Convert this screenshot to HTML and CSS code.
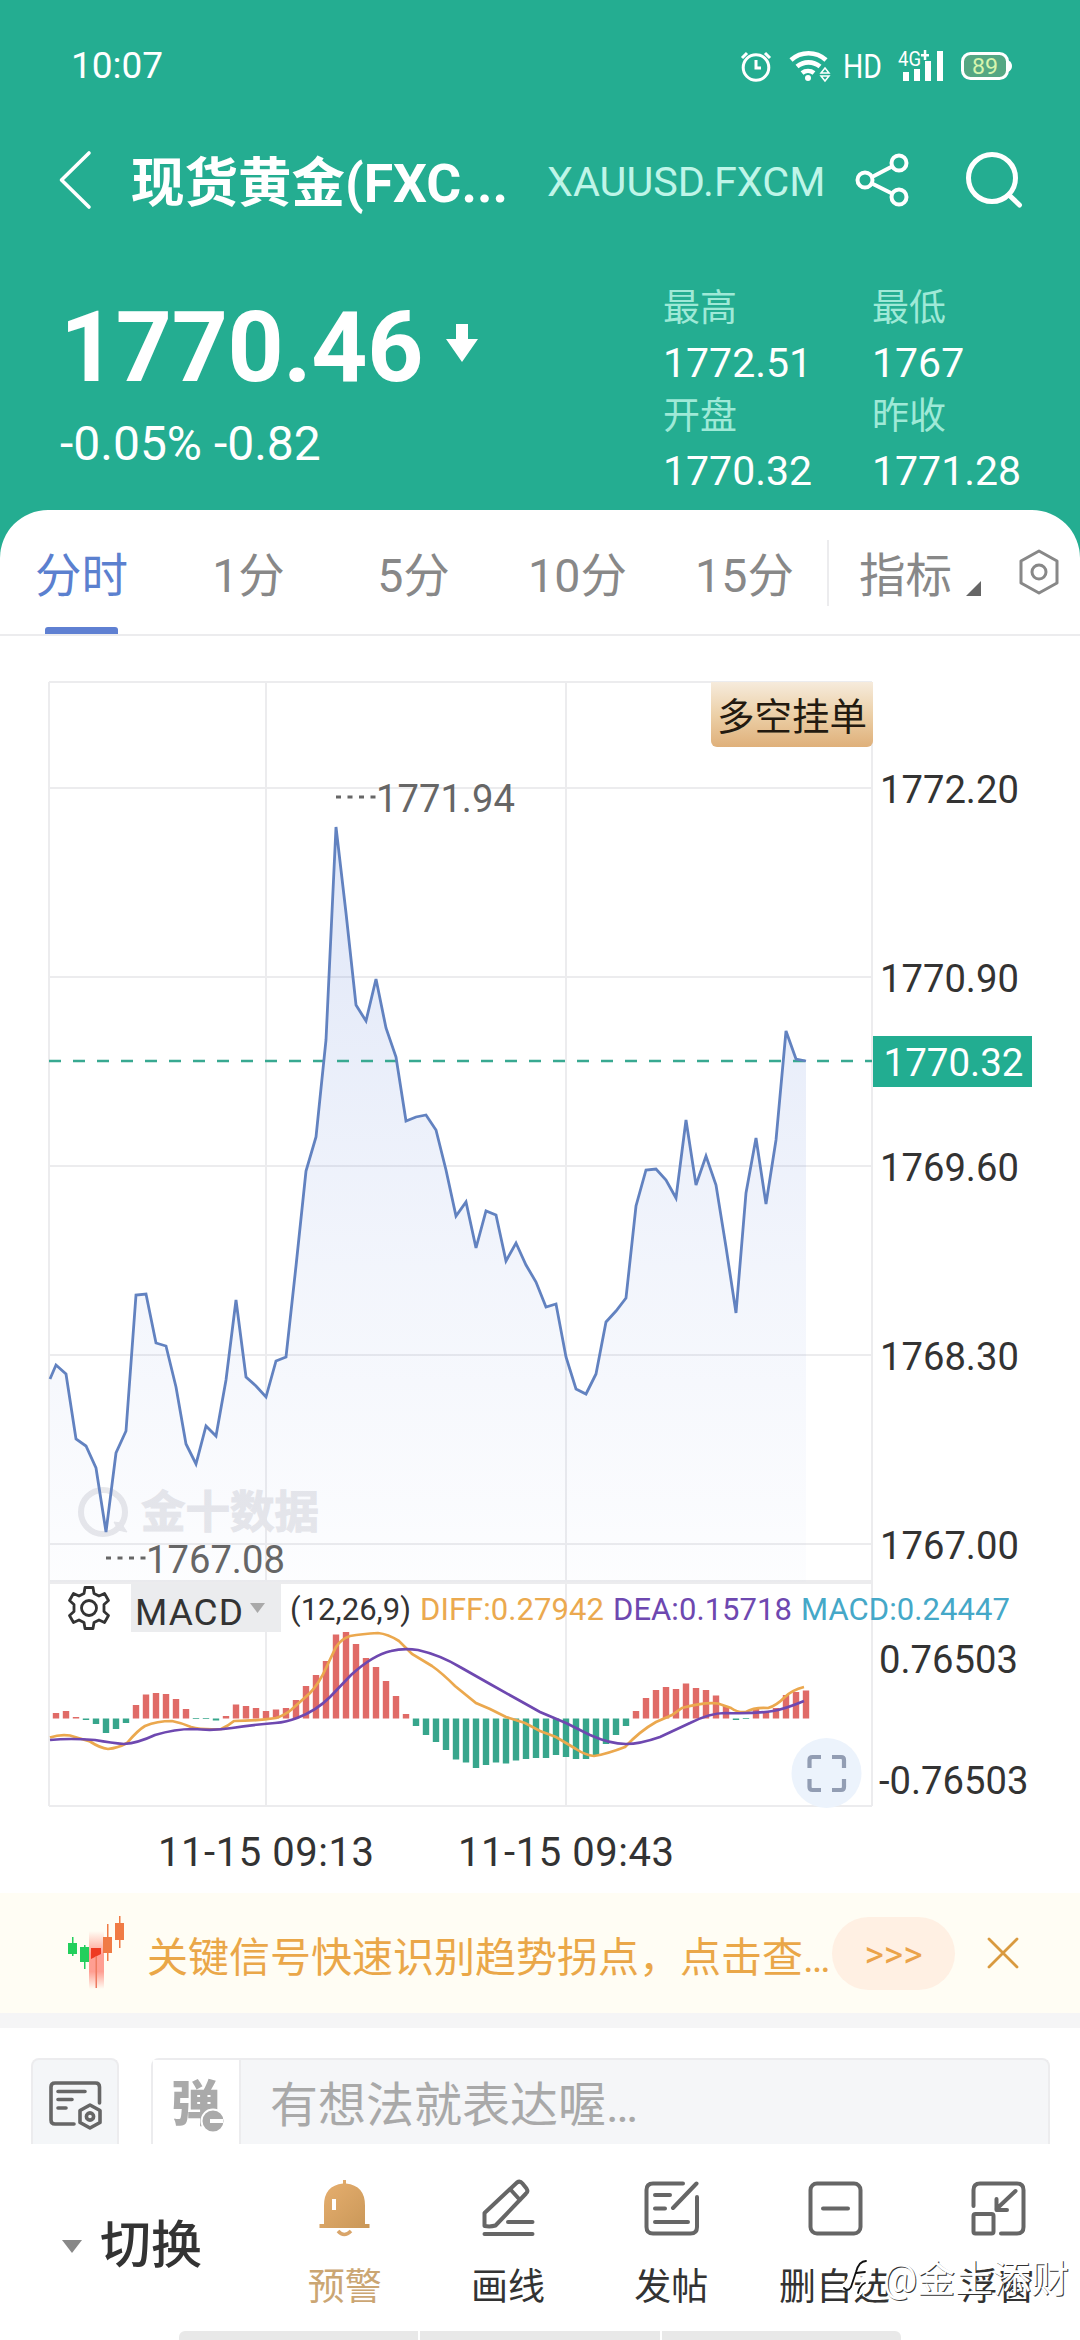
FILE: index.html
```html
<!DOCTYPE html>
<html lang="zh-CN">
<head>
<meta charset="utf-8">
<title>现货黄金</title>
<link rel="stylesheet" href="styles.css">
</head>
<body>
<header class="hero">
  <div class="status">
    <span class="clock">10:07</span>
    <svg class="status-icons" width="280" height="44" viewBox="735 44 280 44" fill="none" stroke="#fff">
      <circle cx="756" cy="67.500" r="12.800" stroke-width="3"/><path d="M756 60v8h5M742 58l5-5M770 58l-5-5" stroke-width="3"/>
      <path d="M791 60a26 26 0 0 1 35 0M797 66.500a18 18 0 0 1 23 0M802 73a10 10 0 0 1 12 0" stroke-width="4.600"/>
      <circle cx="808" cy="78" r="3" fill="#fff" stroke="none"/><path d="M821 73l4-5 4 5zM821 76l4 5 4-5z" stroke-width="1.500"/>
      <g fill="#fff" stroke="none">
        <text x="843" y="77.500" font-size="33" textLength="39" lengthAdjust="spacingAndGlyphs">HD</text>
        <text x="898" y="66" font-size="21" textLength="23" lengthAdjust="spacingAndGlyphs">4G</text>
        <path d="M921 54h8v2.500h-8zM923.800 50h2.500v10h-2.500zM903 72h6v9h-6zM914 69h6v12h-6zM925 61h6v20h-6zM937 51h6v30h-6z"/>
        <path d="M1008 60q4 2 4 6t-4 6z"/>
      </g>
      <rect x="962.500" y="53.500" width="45" height="25" rx="8" fill="#55a783" stroke-width="3"/>
      <text x="972" y="73.500" font-size="22" fill="#d7f5ae" stroke="none" textLength="26" lengthAdjust="spacingAndGlyphs">89</text>
    </svg>
  </div>
  <div class="titlebar">
    <svg class="back" width="36" height="62" viewBox="57 149 36 62" fill="none" stroke="#fff" stroke-width="3.600" stroke-linecap="round" stroke-linejoin="round"><path d="M89 153L61.500 180L89 207"/></svg>
    <h1 class="title">现货黄金(FXC...</h1>
    <span class="symbol">XAUUSD.FXCM</span>
    <svg class="share" width="56" height="56" viewBox="853 152 56 56" fill="none" stroke="#fff" stroke-width="4"><circle cx="898" cy="163" r="7.500"/><circle cx="864" cy="180" r="7.500"/><circle cx="898" cy="197" r="7.500"/><path d="M871 177l20-10.500M871 183.500l20 10"/></svg>
    <svg class="search" width="60" height="60" viewBox="963 150 60 60" fill="none" stroke="#fff" stroke-width="5" stroke-linecap="round"><circle cx="991" cy="178" r="23.500"/><path d="M1008 195l10.500 10"/></svg>
  </div>
  <div class="quote">
    <div class="quote-main">
      <div class="price">1770.46<svg class="down" width="32" height="38" viewBox="0 0 32 38" fill="#fff"><path d="M10 0h12v15h10L16 38 0 15h10z"/></svg></div>
      <div class="change">-0.05% -0.82</div>
    </div>
    <dl class="stats">
      <div><dt>最高</dt><dd>1772.51</dd></div>
      <div><dt>最低</dt><dd>1767</dd></div>
      <div><dt>开盘</dt><dd>1770.32</dd></div>
      <div><dt>昨收</dt><dd>1771.28</dd></div>
    </dl>
  </div>
</header>

<nav class="tabs">
  <span class="tab tab-on">分时</span>
  <span class="tab">1分</span>
  <span class="tab">5分</span>
  <span class="tab">10分</span>
  <span class="tab">15分</span>
  <span class="tab tab-index">指标<i class="corner"></i></span>
  <svg class="hex" width="46" height="48" viewBox="0 0 46 48" fill="none" stroke="#888" stroke-width="3" stroke-linejoin="round"><path d="M23 3l18 10v22L23 45 5 35V13z"/><circle cx="23" cy="24" r="7"/></svg>
</nav>

<svg class="chart" width="1080" height="1257" viewBox="0 636 1080 1257">
  <defs>
    <linearGradient id="area" x1="0" y1="827" x2="0" y2="1582" gradientUnits="userSpaceOnUse"><stop offset="0" stop-color="#5b7fd8" stop-opacity=".19"/><stop offset=".6" stop-color="#5b7fd8" stop-opacity=".075"/><stop offset="1" stop-color="#5b7fd8" stop-opacity=".015"/></linearGradient>
    <linearGradient id="gold" x1="0" y1="0" x2="0" y2="1"><stop offset="0" stop-color="#f6ebdc"/><stop offset=".5" stop-color="#ecd0a8"/><stop offset="1" stop-color="#dfb07a"/></linearGradient>
  </defs>
  <path class="grid" d="M49 682H872M49 788H872M49 977H872M49 1166H872M49 1355H872M49 1544H872M49 1806H872M49 682V1806M266 682V1806M566 682V1806M872 682V1806"/>
  <path class="grid-strong" d="M49 1582H872"/>

  <g class="mark">
    <circle cx="103" cy="1512" r="22" fill="none" stroke-width="6"/>
    <path d="M114 1522l4 8 9 2-6-9z"/>
    <text x="141" y="1528" font-size="44.500">金十数据</text>
  </g>

  <path fill="url(#area)" d="M50 1379L56 1365 66 1374 76 1439 86 1446 96 1468 106 1532 116 1453 126 1431 136 1295 146 1294 156 1343 166 1346 176 1387 186 1444 196 1464 206 1426 216 1436 226 1380 236 1300 246 1377 256 1386 266 1397 276 1361 286 1357 296 1266 306 1171 316 1137 326 1040 336 827 346 913 356 1005 366 1021 376 979 386 1028 396 1057 406 1121 416 1117 426 1115 436 1130 446 1170 456 1216 466 1202 476 1248 486 1211 496 1215 506 1261 516 1243 526 1265 536 1282 546 1307 556 1304 566 1357 576 1389 586 1394 596 1374 606 1322 616 1311 626 1298 636 1206 646 1170 656 1169 666 1180 676 1198 686 1120 696 1185 706 1156 716 1185 726 1247 736 1313 746 1193 756 1138 766 1204 776 1140 786 1031 796 1059 806 1061V1582H50z"/>
  <path class="dash" d="M49 1061H872"/>
  <path class="line" d="M50 1379L56 1365 66 1374 76 1439 86 1446 96 1468 106 1532 116 1453 126 1431 136 1295 146 1294 156 1343 166 1346 176 1387 186 1444 196 1464 206 1426 216 1436 226 1380 236 1300 246 1377 256 1386 266 1397 276 1361 286 1357 296 1266 306 1171 316 1137 326 1040 336 827 346 913 356 1005 366 1021 376 979 386 1028 396 1057 406 1121 416 1117 426 1115 436 1130 446 1170 456 1216 466 1202 476 1248 486 1211 496 1215 506 1261 516 1243 526 1265 536 1282 546 1307 556 1304 566 1357 576 1389 586 1394 596 1374 606 1322 616 1311 626 1298 636 1206 646 1170 656 1169 666 1180 676 1198 686 1120 696 1185 706 1156 716 1185 726 1247 736 1313 746 1193 756 1138 766 1204 776 1140 786 1031 796 1059 806 1061"/>

  <path class="leader" d="M336 797H376M106 1558H146"/>
  <g class="extreme"><text x="376" y="812">1771.94</text><text x="146" y="1573">1767.08</text></g>

  <path d="M711 682H873V741a6 6 0 0 1-6 6H717a6 6 0 0 1-6-6z" fill="url(#gold)"/>
  <text x="717" y="730" font-size="37.500" fill="#231a10">多空挂单</text>

  <g class="axis">
    <text x="880" y="803">1772.20</text><text x="880" y="992">1770.90</text><text x="880" y="1181">1769.60</text><text x="880" y="1370">1768.30</text><text x="880" y="1559">1767.00</text>
    <text x="879" y="1673">0.76503</text><text x="879" y="1794">-0.76503</text>
  </g>
  <path d="M873 1036h159v51H873z" fill="#22ad91"/>
  <text x="883.500" y="1076" font-size="38.500" fill="#fff">1770.32</text>

  <path class="bar up" d="M56 1718.500V1713M66 1718.500V1711M76 1718.500V1717M136 1718.500V1705M146 1718.500V1694.500M156 1718.500V1693M166 1718.500V1694M176 1718.500V1699M186 1718.500V1709M226 1718.500V1716M236 1718.500V1704.500M246 1718.500V1706M256 1718.500V1708M266 1718.500V1711M276 1718.500V1709.500M286 1718.500V1708M296 1718.500V1700M306 1718.500V1686M316 1718.500V1675M326 1718.500V1661M336 1718.500V1634.500M346 1718.500V1632M356 1718.500V1644M366 1718.500V1658M376 1718.500V1667M386 1718.500V1681M396 1718.500V1696M406 1718.500V1714M636 1718.500V1711M646 1718.500V1698M656 1718.500V1690M666 1718.500V1687M676 1718.500V1689M686 1718.500V1683.500M696 1718.500V1688M706 1718.500V1690M716 1718.500V1695.500M726 1718.500V1706M756 1718.500V1709M766 1718.500V1711M776 1718.500V1708M786 1718.500V1695M796 1718.500V1692M806 1718.500V1690.500"/>
  <path class="bar down-bar" d="M86 1718.500V1720M96 1718.500V1724M106 1718.500V1733M116 1718.500V1729M126 1718.500V1723M196 1718V1718.800M206 1718V1718.800M216 1718.500V1720.500M416 1718.500V1726M426 1718.500V1735M436 1718.500V1742M446 1718.500V1750M456 1718.500V1759.500M466 1718.500V1762.500M476 1718.500V1768M486 1718.500V1765M496 1718.500V1762.500M506 1718.500V1763.500M516 1718.500V1760.500M526 1718.500V1759M536 1718.500V1758M546 1718.500V1758M556 1718.500V1755M566 1718.500V1757M576 1718.500V1759M586 1718.500V1759M596 1718.500V1755M606 1718.500V1744M616 1718.500V1735M626 1718.500V1726M736 1718.500V1720M746 1718V1718.800"/>
  <path class="curve" stroke="#eba84e" d="M50 1737.500Q60 1734 70 1735.500L90 1741.500Q100 1748 108 1749Q118 1748 127 1743Q138 1730 145 1726Q157 1721 172 1721Q182 1723 191 1727Q202 1730 221 1729Q228 1726 234 1721Q255 1721 276 1718Q285 1715 291 1710L310 1693Q320 1682 326 1668L336 1647Q341 1639 350 1636Q362 1634 378 1633Q388 1634 399 1641L412 1654 432 1666Q442 1673 455 1686L476 1703 490 1709 506 1717 525 1723 540 1731 556 1737 576 1749Q585 1755 594 1756Q607 1754 625 1747Q640 1731 656 1722L672 1715 682 1708Q704 1702 718 1703.500L731 1708Q738 1713 746 1712Q754 1707 768 1708Q776 1706 785 1697Q792 1690 804 1687"/>
  <path class="curve" stroke="#6e48b0" d="M50 1740Q70 1738 95 1740Q112 1743 124 1744Q138 1743 155 1735Q175 1729 193 1729Q215 1731 232 1728Q250 1725 275 1723Q287 1722 297 1718Q316 1711 330 1697L351 1675Q373 1655 391 1651Q403 1648 418 1650Q440 1655 460 1667L490 1684 515 1698 540 1712 566 1723 590 1735Q610 1744 626 1744Q640 1744 660 1737L690 1723Q710 1713 725 1713Q754 1714 773 1711Q785 1709 804 1701"/>

  <path d="M131 1584h150v48H131z" fill="#ebecee"/>
  <path d="M250 1603h15l-7.500 10z" fill="#a9a9a9"/>
  <g transform="translate(89 1608)" fill="none" stroke="#333" stroke-width="2.800" stroke-linejoin="round"><circle r="7.500"/><path d="M-4-20.500H4L5-14.500 10-12 15.500-14.500 19.500-7.500 15-3.500V3.500L19.500 7.500 15.500 14.500 10 12 5 14.500 4 20.500H-4L-5 14.500-10 12-15.500 14.500-19.500 7.500-15 3.500V-3.500L-19.500-7.500-15.500-14.500-10-12-5-14.500z"/></g>
  <text x="135" y="1625" font-size="37" fill="#333" textLength="108">MACD</text>
  <g font-size="31">
    <text x="290" y="1620" fill="#333" textLength="121">(12,26,9)</text>
    <text x="420" y="1620" fill="#eba94f" textLength="184">DIFF:0.27942</text>
    <text x="613" y="1620" fill="#6e48b0" textLength="179">DEA:0.15718</text>
    <text x="801" y="1620" fill="#45a8c8" textLength="209">MACD:0.24447</text>
  </g>
  <circle cx="826.500" cy="1773" r="35" fill="#ecf3fc"/>
  <path d="M809.500 1768v-8q0-3 3-3h8.500M832 1757h9q3 0 3 3v8M844 1779v8q0 3-3 3h-9M821 1790h-8.500q-3 0-3-3v-8" fill="none" stroke="#929db3" stroke-width="4.200"/>
  <g font-size="40" fill="#333"><text x="158" y="1866" textLength="216">11-15 09:13</text><text x="458" y="1866" textLength="216">11-15 09:43</text></g>
</svg>

<section class="banner">
  <svg class="candles" width="64" height="80" viewBox="64 1914 64 80">
    <defs><linearGradient id="glow" x1="0" y1="0" x2="0" y2="1"><stop offset="0" stop-color="#ff4030" stop-opacity="0"/><stop offset=".4" stop-color="#ff4030" stop-opacity=".5"/><stop offset=".7" stop-color="#ff4030" stop-opacity=".5"/><stop offset="1" stop-color="#ff4030" stop-opacity="0"/></linearGradient></defs>
    <path fill="url(#glow)" d="M89 1932h15v58H89z"/>
    <path fill="#22cf5c" d="M68 1944h9v11h-9zM72 1938h1.500v19H72zM80 1948h9v15h-9zM84 1946h1.500v24H84z"/>
    <path fill="#ee3a22" d="M91 1949h10v6l-10 5z"/><path fill="#ee7b60" d="M95.500 1957h1.500v32h-1.500z"/>
    <path fill="#f07b45" d="M103 1938h9v16h-9zM107 1925h1.500v37H107zM115 1924h9v17h-9zM119 1917h1.500v32H119z"/>
  </svg>
  <span class="banner-text">关键信号快速识别趋势拐点，点击查…</span>
  <span class="more">&gt;&gt;&gt;</span>
  <svg class="close" width="32" height="32" viewBox="0 0 32 32" stroke="#d99a3f" stroke-width="2.800" stroke-linecap="round"><path d="M2 2l28 28M30 2L2 30"/></svg>
</section>

<section class="compose">
  <div class="note">
    <svg width="54" height="52" viewBox="48 2080 54 52" fill="none" stroke="#666" stroke-width="3.600" stroke-linecap="round" stroke-linejoin="round"><path d="M99.500 2103v-16q0-4-4-4H55q-4 0-4 4v33q0 4 4 4h19M58 2091.500h27M58 2099.500h14M58 2108h8M90 2105l10 5.500v12L90 2128l-10-5.500v-12z"/><circle cx="90" cy="2116.500" r="3.600"/></svg>
  </div>
  <div class="field">
    <span class="danmu">弹<svg class="danmu-dot" width="26" height="26" viewBox="0 0 26 26"><circle cx="13" cy="13" r="11.500" fill="#aaa" stroke="#fff" stroke-width="2"/><path d="M10 13h13" stroke="#fff" stroke-width="4"/></svg></span>
    <span class="placeholder">有想法就表达喔…</span>
  </div>
</section>

<footer class="toolbar">
  <div class="switch"><i class="caret"></i>切换</div>
  <div class="tool tool-gold">
    <svg width="56" height="62" viewBox="317 2178 56 62"><defs><linearGradient id="bell" x1="0" y1="0" x2="1" y2="1"><stop offset="0" stop-color="#e8b070"/><stop offset="1" stop-color="#c99758"/></linearGradient></defs><path fill="url(#bell)" d="M343 2180h3v3.500q19 2 19 22V2224h4.500v4H319.500v-4H324v-18.500q0-20 19-22z"/><path d="M334 2199v11" stroke="#fff" stroke-width="4"/><path d="M338 2231q6 7 13 0" fill="none" stroke="#d9a56a" stroke-width="3.500"/></svg>
    <span>预警</span>
  </div>
  <div class="tool">
    <svg width="56" height="62" viewBox="479 2178 56 62" class="ico"><path d="M483.500 2225v-12L516 2182.500q3-2 5.500 1l4 5q2 3-.5 5L494.500 2225.500q-5 1.500-11 .5zM509 2189l10 11M507 2222h24.500M483.500 2234h48"/></svg>
    <span>画线</span>
  </div>
  <div class="tool">
    <svg width="56" height="62" viewBox="642 2178 56 62" class="ico"><path d="M682 2183.500h-30q-6.500 0-6.500 6.500v37q0 6.500 6.500 6.500h37.500q6.500 0 6.500-6.500v-30M695.500 2183.500L672 2208M654 2195h15M654 2208.500h10M654 2222h33"/></svg>
    <span>发帖</span>
  </div>
  <div class="tool">
    <svg width="56" height="62" viewBox="805 2178 56 62" class="ico"><rect x="808.500" y="2183.500" width="50" height="50" rx="6.500"/><path d="M821 2208.500h25"/></svg>
    <span>删自选</span>
  </div>
  <div class="tool">
    <svg width="56" height="62" viewBox="969 2178 56 62" class="ico"><path d="M972.500 2206v-16q0-6.500 6.500-6.500h37q6.500 0 6.500 6.500v37q0 6.500-6.500 6.500h-16M1014.500 2191L995.500 2209M995.500 2199v11h10.500"/><rect x="972.500" y="2214" width="20" height="19.500" rx="2"/></svg>
    <span>浮窗</span>
  </div>
  <div class="credit"><svg width="42" height="42" viewBox="0 0 42 42" fill="none" stroke-linecap="round"><path d="M3 31Q9 28 12 15T24 6M10 17h14M18 36Q28 24 29 6" stroke="#fff" stroke-width="7"/><path d="M3 32q4 4 7-1l5-15Q18 5 25 5M15 17l9-1M17 37Q19 29 24 27" stroke="#111" stroke-width="1.800"/></svg><span>@金土添财</span></div>
</footer>
<div class="strip"><i></i><i></i><i></i></div>
</body>
</html>
```
FILE: styles.css
```css
* { box-sizing: border-box; }
body {
  margin: 0;
  width: 1080px;
  height: 2340px;
  overflow: hidden;
  display: flex;
  flex-direction: column;
  background: #fff;
  color: #333;
  font-family: Roboto, "Noto Sans CJK SC", sans-serif;
}
svg { display: block; flex: none; }

.hero { height: 558px; flex: none; background: #24ad91; color: #fff; }
.status { height: 132px; display: flex; justify-content: space-between; align-items: center; padding: 0 65px 0 71px; }
.clock { font-size: 37px; line-height: 44px; }
.titlebar { height: 96px; display: flex; align-items: center; padding-left: 57px; }
.title { margin: 8px 0 0 38px; width: 379px; font-size: 53.5px; line-height: 70px; font-weight: 700; white-space: nowrap; }
.symbol { margin: 4px 0 0 37px; width: 278px; font-size: 41.4px; color: #bff5e8; white-space: nowrap; }
.share { margin-left: 29px; }
.search { margin-left: 54px; }
.quote { display: flex; padding-top: 53px; }
.quote-main { width: 663px; padding-left: 60px; }
.price { display: flex; align-items: center; margin: 12px 0 11px 0; font-size: 98px; line-height: 110px; font-weight: 700; letter-spacing: -.4px; }
.down { margin: -10px 0 0 23px; }
.change { font-size: 48px; line-height: 60px; white-space: nowrap; }
.stats { margin: 0; display: grid; grid-template-columns: 209px 170px; }
.stats dt { font-size: 37px; line-height: 56px; color: #9fe9d7; }
.stats dd { margin: 0; font-size: 41px; line-height: 52px; }

.tabs {
  height: 126px;
  margin-top: -48px;
  flex: none;
  display: grid;
  grid-template-columns: 163px 171px 159px 169px 165px 180px 73px;
  align-items: center;
  justify-items: center;
  border-radius: 48px 48px 0 0;
  background: #fff;
  border-bottom: 2px solid #ececee;
}
.tab { height: 124px; line-height: 132px; font-size: 46.5px; color: #888; position: relative; }
.tab-on { color: #5b80cf; }
.tab-on::after { content: ""; position: absolute; left: 10px; right: 10px; bottom: 0; height: 7px; border-radius: 3px 3px 0 0; background: #5f80d2; }
.tab-index { width: 180px; padding-left: 32px; }
.tab-index::before { content: ""; position: absolute; left: 0; top: 30px; width: 2px; height: 66px; background: #ececee; }
.corner { position: absolute; right: 26px; top: 71px; border-left: 15px solid transparent; border-bottom: 15px solid #666; }
.hex { margin-right: 10px; }

.chart { font-family: Roboto, "Noto Sans CJK SC", sans-serif; }
.grid { fill: none; stroke: #ececee; stroke-width: 2; }
.grid-strong { stroke: #ececee; stroke-width: 4; }
.line { fill: none; stroke: #6282c0; stroke-width: 2.8; stroke-linejoin: miter; }
.dash { fill: none; stroke: #38a991; stroke-width: 2.4; stroke-dasharray: 12 12; }
.leader { fill: none; stroke: #666; stroke-width: 3; stroke-dasharray: 5 6.5; }
.extreme { font-size: 38.2px; fill: #666; }
.axis { font-size: 38.2px; fill: #333; }
.mark { fill: #e8e8eb; stroke: #e8e8eb; font-weight: 700; }
.mark text { stroke-width: 1; }
.bar { stroke-width: 6.4; }
.up { stroke: #e06b67; }
.down-bar { stroke: #37a68c; }
.curve { fill: none; stroke-width: 2.7; }

.banner { height: 135px; flex: none; display: flex; align-items: center; padding-left: 64px; background: #fffdf4; border-bottom: 15px solid #f5f5f6; }
.banner-text { margin: 1px 0 0 19px; width: 685px; font-size: 41px; color: #eaa748; white-space: nowrap; }
.more { width: 123px; height: 73px; border-radius: 37px; background: #fff0e3; color: #eba34a; font-size: 37px; line-height: 76px; text-align: center; }
.close { margin-left: 32px; }

.compose { height: 116px; flex: none; display: flex; gap: 32px; padding: 30px 30px 0 31px; }
.note { width: 88px; border: 2px solid #ececee; border-bottom: 0; border-radius: 8px 8px 0 0; background: #f4f6f8; padding: 20px 0 0 15px; }
.field { flex: 1; display: flex; border: 2px solid #ececee; border-bottom: 0; border-radius: 8px 8px 0 0; background: #f5f6f8; }
.danmu { position: relative; width: 88px; border-right: 2px solid #ececee; background: #fff; color: #aaa; font-size: 49px; line-height: 89px; font-weight: 900; padding-left: 18px; }
.danmu-dot { position: absolute; left: 47px; top: 48px; }
.placeholder { margin-left: 29px; font-size: 48px; line-height: 92px; color: #a9a9a9; }

.toolbar { height: 187px; flex: none; position: relative; display: flex; padding-top: 34px; }
.switch { width: 263px; padding-left: 62px; display: flex; align-items: center; gap: 18px; font-size: 51px; line-height: 60px; height: 136px; font-weight: 500; color: #333; }
.caret { border: 10px solid transparent; border-top: 13px solid #888; border-bottom: 0; }
.tool { width: 163.3px; display: flex; flex-direction: column; align-items: center; gap: 23px; font-size: 37px; line-height: 50px; white-space: nowrap; }
.tool-gold { color: #cba673; }
.ico { fill: none; stroke: #666; stroke-width: 4; stroke-linecap: round; stroke-linejoin: round; }
.credit { position: absolute; left: 841px; top: 112px; display: flex; font-size: 38px; line-height: 46px; color: #fff; white-space: nowrap; text-shadow: 1px 1px 0 #333; }

.strip { width: 722px; height: 9px; margin-left: 179px; display: flex; gap: 2px; overflow: hidden; border-radius: 6px 6px 0 0; }
.strip i { flex: 1; background: #e8e8e8; }
```
